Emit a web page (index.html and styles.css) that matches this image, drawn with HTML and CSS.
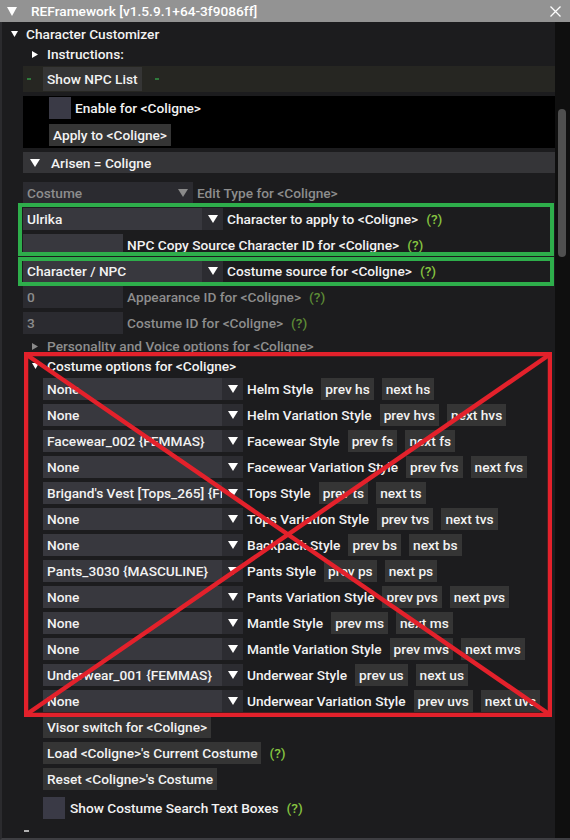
FILE: index.html
```html
<!DOCTYPE html>
<html>
<head>
<meta charset="utf-8">
<link rel="stylesheet" href="styles.css">
</head>
<body>
<div class="window">
  <div class="titlebar">
    <svg class="ttri" width="10" height="9" viewBox="0 0 10 9"><path d="M0 0H10L5 9Z" fill="#fff"/></svg>
    <span class="title">REFramework [v1.5.9.1+64-3f9086ff]</span>
    <svg class="close" width="11" height="11" viewBox="0 0 11 11"><path d="M0.5 0.5L10.5 10.5M10.5 0.5L0.5 10.5" stroke="#fff" stroke-width="1.3"/></svg>
  </div>
  <div class="body">
    <div class="content">
      <div class="tree root">
        <span class="tw"><svg width="7" height="6" viewBox="0 0 7 6"><path d="M0 0H7L3.5 6Z" fill="#fff"/></svg></span>
        <span>Character Customizer</span>
      </div>
      <div class="child">
        <div class="tree l1">
          <span class="tw"><svg width="6" height="7" viewBox="0 0 6 7"><path d="M0 0L6 3.5L0 7Z" fill="#fff"/></svg></span>
          <span>Instructions:</span>
        </div>
        <div class="npcbar">
          <span class="gdash"></span>
          <span class="btn big">Show NPC List</span>
          <span class="gdash second"></span>
        </div>
        <div class="blackbox">
          <div class="row"><span class="check"></span><span class="label">Enable for &lt;Coligne&gt;</span></div>
          <div class="row apply"><span class="btn">Apply to &lt;Coligne&gt;</span></div>
        </div>
        <div class="header">
          <span class="hw"><svg width="10" height="8" viewBox="0 0 10 8"><path d="M0 0H10L5 8Z" fill="#fff"/></svg></span>
          <span>Arisen = Coligne</span>
        </div>
        <div class="stack top">
          <div class="row">
            <span class="combo w170 dim"><span class="val">Costume</span><span class="arr"><svg width="10" height="8" viewBox="0 0 10 8"><path d="M0 0H10L5 8Z" fill="#8a8a8a"/></svg></span></span>
            <span class="label dimtext">Edit Type for &lt;Coligne&gt;</span>
          </div>
          <div class="hl hl1">
            <div class="row">
              <span class="combo"><span class="val">Ulrika</span><span class="arr"><svg width="10" height="8" viewBox="0 0 10 8"><path d="M0 0H10L5 8Z" fill="#fff"/></svg></span></span>
              <span class="label">Character to apply to &lt;Coligne&gt;</span><span class="help">(?)</span>
            </div>
            <div class="row">
              <span class="input"></span>
              <span class="label">NPC Copy Source Character ID for &lt;Coligne&gt;</span><span class="help">(?)</span>
            </div>
          </div>
          <div class="hl hl2">
            <div class="row">
              <span class="combo"><span class="val">Character / NPC</span><span class="arr"><svg width="10" height="8" viewBox="0 0 10 8"><path d="M0 0H10L5 8Z" fill="#fff"/></svg></span></span>
              <span class="label">Costume source for &lt;Coligne&gt;</span><span class="help">(?)</span>
            </div>
          </div>
          <div class="row">
            <span class="input dim">0</span>
            <span class="label dimtext">Appearance ID for &lt;Coligne&gt;</span><span class="help dimhelp">(?)</span>
          </div>
          <div class="row">
            <span class="input dim">3</span>
            <span class="label dimtext">Costume ID for &lt;Coligne&gt;</span><span class="help dimhelp">(?)</span>
          </div>
        </div>
        <div class="tree l1 pers dimtext">
          <span class="tw"><svg width="6" height="7" viewBox="0 0 6 7"><path d="M0 0L6 3.5L0 7Z" fill="#8a8a8a"/></svg></span>
          <span>Personality and Voice options for &lt;Coligne&gt;</span>
        </div>
        <div class="redbox">
          <div class="tree l1">
            <span class="tw"><svg width="7" height="6" viewBox="0 0 7 6"><path d="M0 0H7L3.5 6Z" fill="#fff"/></svg></span>
            <span>Costume options for &lt;Coligne&gt;</span>
          </div>
          <div class="stack costume">
            <div class="row"><span class="combo"><span class="val">None</span><span class="arr"><svg width="10" height="8" viewBox="0 0 10 8"><path d="M0 0H10L5 8Z" fill="#fff"/></svg></span></span><span class="label">Helm Style</span><span class="btn">prev hs</span><span class="btn">next hs</span></div>
            <div class="row"><span class="combo"><span class="val">None</span><span class="arr"><svg width="10" height="8" viewBox="0 0 10 8"><path d="M0 0H10L5 8Z" fill="#fff"/></svg></span></span><span class="label">Helm Variation Style</span><span class="btn">prev hvs</span><span class="btn">next hvs</span></div>
            <div class="row"><span class="combo"><span class="val">Facewear_002 {FEMMAS}</span><span class="arr"><svg width="10" height="8" viewBox="0 0 10 8"><path d="M0 0H10L5 8Z" fill="#fff"/></svg></span></span><span class="label">Facewear Style</span><span class="btn">prev fs</span><span class="btn">next fs</span></div>
            <div class="row"><span class="combo"><span class="val">None</span><span class="arr"><svg width="10" height="8" viewBox="0 0 10 8"><path d="M0 0H10L5 8Z" fill="#fff"/></svg></span></span><span class="label">Facewear Variation Style</span><span class="btn">prev fvs</span><span class="btn">next fvs</span></div>
            <div class="row"><span class="combo"><span class="val">Brigand's Vest [Tops_265] {FEMMAS}</span><span class="arr"><svg width="10" height="8" viewBox="0 0 10 8"><path d="M0 0H10L5 8Z" fill="#fff"/></svg></span></span><span class="label">Tops Style</span><span class="btn">prev ts</span><span class="btn">next ts</span></div>
            <div class="row"><span class="combo"><span class="val">None</span><span class="arr"><svg width="10" height="8" viewBox="0 0 10 8"><path d="M0 0H10L5 8Z" fill="#fff"/></svg></span></span><span class="label">Tops Variation Style</span><span class="btn">prev tvs</span><span class="btn">next tvs</span></div>
            <div class="row"><span class="combo"><span class="val">None</span><span class="arr"><svg width="10" height="8" viewBox="0 0 10 8"><path d="M0 0H10L5 8Z" fill="#fff"/></svg></span></span><span class="label">Backpack Style</span><span class="btn">prev bs</span><span class="btn">next bs</span></div>
            <div class="row"><span class="combo"><span class="val">Pants_3030 {MASCULINE}</span><span class="arr"><svg width="10" height="8" viewBox="0 0 10 8"><path d="M0 0H10L5 8Z" fill="#fff"/></svg></span></span><span class="label">Pants Style</span><span class="btn">prev ps</span><span class="btn">next ps</span></div>
            <div class="row"><span class="combo"><span class="val">None</span><span class="arr"><svg width="10" height="8" viewBox="0 0 10 8"><path d="M0 0H10L5 8Z" fill="#fff"/></svg></span></span><span class="label">Pants Variation Style</span><span class="btn">prev pvs</span><span class="btn">next pvs</span></div>
            <div class="row"><span class="combo"><span class="val">None</span><span class="arr"><svg width="10" height="8" viewBox="0 0 10 8"><path d="M0 0H10L5 8Z" fill="#fff"/></svg></span></span><span class="label">Mantle Style</span><span class="btn">prev ms</span><span class="btn">next ms</span></div>
            <div class="row"><span class="combo"><span class="val">None</span><span class="arr"><svg width="10" height="8" viewBox="0 0 10 8"><path d="M0 0H10L5 8Z" fill="#fff"/></svg></span></span><span class="label">Mantle Variation Style</span><span class="btn">prev mvs</span><span class="btn">next mvs</span></div>
            <div class="row"><span class="combo"><span class="val">Underwear_001 {FEMMAS}</span><span class="arr"><svg width="10" height="8" viewBox="0 0 10 8"><path d="M0 0H10L5 8Z" fill="#fff"/></svg></span></span><span class="label">Underwear Style</span><span class="btn">prev us</span><span class="btn">next us</span></div>
            <div class="row"><span class="combo"><span class="val">None</span><span class="arr"><svg width="10" height="8" viewBox="0 0 10 8"><path d="M0 0H10L5 8Z" fill="#fff"/></svg></span></span><span class="label">Underwear Variation Style</span><span class="btn">prev uvs</span><span class="btn">next uvs</span></div>
          </div>
          <svg class="cross" width="528" height="365" viewBox="0 0 528 365">
            <rect x="2" y="2" width="524" height="361" fill="none" stroke="#e3212b" stroke-width="4.5"/>
            <path d="M3 3L525 362M525 3L3 362" stroke="#e3212b" stroke-width="4.5"/>
          </svg>
        </div>
        <div class="stack bottom">
          <div class="row"><span class="btn">Visor switch for &lt;Coligne&gt;</span></div>
          <div class="row"><span class="btn">Load &lt;Coligne&gt;'s Current Costume</span><span class="help">(?)</span></div>
          <div class="row"><span class="btn">Reset &lt;Coligne&gt;'s Costume</span></div>
          <div class="row cbrow"><span class="check"></span><span class="label">Show Costume Search Text Boxes</span><span class="help">(?)</span></div>
        </div>
      </div>
      <div class="enddash"></div>
    </div>
    <div class="scrollbar"><div class="thumb"></div></div>
  </div>
</div>
</body>
</html>
```

FILE: styles.css
```css
* { box-sizing: border-box; }
body {
  margin: 0;
  background: #1c1c1e;
  font-family: Roboto, "Noto Sans", sans-serif;
  font-weight: 500;
  font-size: 13.7px;
  color: #f2f2f2;
}
.window {
  width: 570px;
  height: 840px;
  display: flex;
  flex-direction: column;
  overflow: hidden;
}
.titlebar {
  height: 22px;
  flex: none;
  background: #939393;
  display: flex;
  align-items: center;
  padding-left: 7px;
  color: #fff;
  white-space: nowrap;
}
.ttri { margin-right: 14px; }
.title { flex: 1; }
.close { margin-right: 9px; }
.body {
  flex: 1;
  display: flex;
  background: #1c1c1e;
  border-left: 2px solid #2b2b2e;
  border-bottom: 2px solid #3e3e42;
  min-height: 0;
}
.content {
  width: 553px;
  flex: none;
  padding-top: 2px;
  display: flex;
  flex-direction: column;
  white-space: nowrap;
}
.scrollbar {
  flex: 1;
  background: #0f0f0f;
  padding: 87px 4px 0 3px;
}
.thumb {
  height: 148px;
  background: #4f4f4f;
  border-radius: 4px;
}
.tree {
  height: 20px;
  display: flex;
  align-items: center;
}
.tw { display: flex; align-items: center; }
.root { padding-left: 9px; }
.root .tw { width: 15px; }
.l1 { padding-left: 9px; }
.l1 .tw { width: 15px; }
.child {
  margin-left: 21px;
  display: flex;
  flex-direction: column;
}
.npcbar {
  margin-top: 2px;
  height: 26px;
  background: #262622;
  display: flex;
  align-items: center;
  padding-left: 4px;
}
.gdash {
  width: 4px;
  height: 2px;
  background: #2f7a3c;
}
.gdash.second { margin-left: 13px; }
.btn {
  height: 22px;
  line-height: 22px;
  padding: 0 4px;
  background: #353535;
  margin-left: 8px;
}
.btn.big {
  height: 24px;
  line-height: 24px;
  margin-left: 12px;
}
.row {
  height: 22px;
  display: flex;
  align-items: center;
}
.row > .btn:first-child { margin-left: 0; }
.blackbox {
  margin-top: 4px;
  height: 52px;
  background: #000;
  padding: 1px 0 0 26px;
}
.blackbox .row:first-child { margin-top: 0; }
.blackbox .apply { margin-top: 5px; }
.check {
  width: 22px;
  height: 22px;
  background: #3a3a46;
}
.label { margin-left: 4px; }
.help { margin-left: 8px; color: #86c440; }
.dimhelp { color: #5e8c36; }
.dimtext { color: #8d8d8d; }
.header {
  margin-top: 4px;
  height: 21px;
  background: #353538;
  display: flex;
  align-items: center;
  padding-left: 7px;
}
.hw { width: 21px; display: flex; }
.stack {
  display: flex;
  flex-direction: column;
  gap: 4px;
}
.stack.top { margin-top: 9px; }
.combo {
  width: 200px;
  height: 22px;
  display: flex;
  background: #38383e;
  overflow: hidden;
}
.combo.w170 { width: 170px; }
.combo .val {
  flex: 1;
  min-width: 0;
  overflow: hidden;
  padding-left: 4px;
  line-height: 22px;
}
.combo .arr {
  width: 21px;
  flex: none;
  background: #2c2c31;
  display: flex;
  align-items: center;
  justify-content: center;
}
.combo.dim { background: #2b2b30; color: #8d8d8d; }
.combo.dim .arr { background: #2b2b30; }
.input {
  width: 100px;
  height: 22px;
  line-height: 22px;
  padding-left: 4px;
  background: #38383e;
}
.input.dim { background: #2b2b30; color: #8d8d8d; }
.hl {
  position: relative;
  display: flex;
  flex-direction: column;
  gap: 4px;
}
.hl::after {
  content: "";
  position: absolute;
  border: 4px solid #2eae4b;
  left: -5px;
  right: 1px;
  pointer-events: none;
}
.hl1::after { top: -5px; bottom: 0; }
.hl2::after { top: -3px; bottom: -4px; }
.pers { margin-top: 2px; }
.redbox {
  position: relative;
  display: flex;
  flex-direction: column;
}
.stack.costume { margin-top: 2px; padding-left: 20px; }
.cross {
  position: absolute;
  left: 1px;
  top: -4px;
}
.stack.bottom { margin-top: 4px; padding-left: 20px; }
.cbrow { margin-top: 3px; }
.cbrow .label { margin-left: 5px; }
.enddash {
  margin: 11px 0 0 22px;
  width: 5px;
  height: 2px;
  background: #b0b0b0;
}
```
